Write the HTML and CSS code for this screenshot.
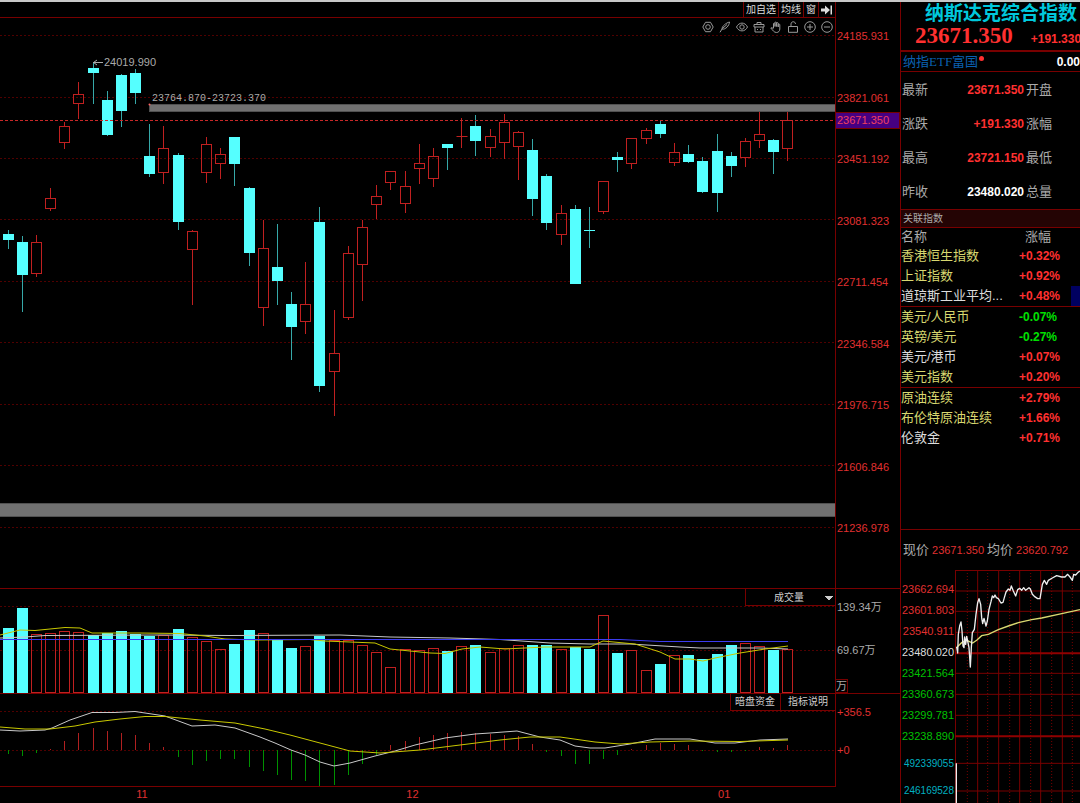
FILE: index.html
```html
<!DOCTYPE html>
<html lang="zh-CN">
<head>
<meta charset="utf-8">
<title>纳斯达克综合指数</title>
<link rel="stylesheet" href="styles.css">
</head>
<body>
<div class="terminal">
  <main class="charts">
    <header class="toolbar">
      <nav class="tabs">
        <button type="button">加自选</button>
        <button type="button">均线</button>
        <button type="button">窗</button>
        <button type="button" aria-label="收起侧栏"><svg width="12" height="10" viewBox="0 0 12 10"><path d="M0 3.500h4V0.500L9 5 4 9.500V6.500H0zM9.500 0.500h1.500v9H9.500z" fill="#ddd"/></svg></button>
      </nav>
    </header>
    <section class="panel">
      <div class="plot">
        <div class="tools">
          <button type="button" aria-label="设置"><svg viewBox="0 0 12 12"><path d="M3.500 1.300h5L11.200 6 8.500 10.700h-5L.8 6z"/><circle cx="6" cy="6" r="2.300"/></svg></button>
          <button type="button" aria-label="画笔"><svg viewBox="0 0 12 12"><path d="M1 11.300 3 8M3 8c0-3 4-6 7.500-7C10.300 4.500 6.500 9 3 8zM3.500 7.500 8 3.500"/></svg></button>
          <button type="button" aria-label="显示"><svg viewBox="0 0 12 12"><path d="M.5 6C3 .8 9 .8 11.500 6 9 11.200 3 11.200.5 6z"/><circle cx="6" cy="6" r="2.200"/></svg></button>
          <button type="button" aria-label="删除"><svg viewBox="0 0 12 12"><path d="M1 3.500h10v2.500H1zM4 3.500V1.500h4v2M2 6v5h8V6M4.500 8v1M7.500 8v1"/></svg></button>
          <button type="button" aria-label="拖动"><svg viewBox="0 0 12 12"><path d="M3.500 7V2.500q.8-1 1.500 0V5.500v-4q.9-1 1.600 0v4-3.500q.9-1 1.600 0V6 3.500q.9-.9 1.600 0V8c0 2-1.300 3.500-3.300 3.500C4 11.500 3 9.500.8 7q.7-1 2.700.7"/></svg></button>
          <button type="button" aria-label="锁定"><svg viewBox="0 0 12 12"><path d="M1.500 5.500h9v5.800h-9zM4 5.500V3c0-3 4.500-3 4.500 0"/></svg></button>
          <button type="button" aria-label="放大"><svg viewBox="0 0 12 12"><circle cx="6" cy="6" r="5.300"/><path d="M3 6h6M6 3v6"/></svg></button>
          <button type="button" aria-label="缩小"><svg viewBox="0 0 12 12"><circle cx="6" cy="6" r="5.300"/><path d="M3 6h6"/></svg></button>
        </div>
        <svg id="candles" class="candle-chart" viewBox="0 35 835 553" preserveAspectRatio="none" role="img" aria-label="日K线"></svg>
      </div>
      <div class="axis price-axis">
        <span>24185.931</span><span>23821.061</span><span>23451.192</span><span>23081.323</span><span>22711.454</span><span>22346.584</span><span>21976.715</span><span>21606.846</span><span>21236.978</span>
        <strong class="current">23671.350</strong>
      </div>
    </section>
    <section class="panel">
      <div class="plot">
        <div class="plot-head">
          <select class="indicator" aria-label="指标"><option>成交量</option></select>
        </div>
        <svg id="volume" class="volume-chart" viewBox="0 606 835 87" preserveAspectRatio="none" role="img" aria-label="成交量"></svg>
      </div>
      <div class="axis volume-axis">
        <span>139.34万</span><span class="half">69.67万</span><span class="unit">万</span>
      </div>
    </section>
    <section class="panel">
      <div class="plot">
        <div class="plot-head">
          <button type="button">暗盘资金</button><button type="button" class="wide">指标说明</button>
        </div>
        <svg id="macd" class="macd-chart" viewBox="0 711 835 75" preserveAspectRatio="none" role="img" aria-label="MACD"></svg>
      </div>
      <div class="axis macd-axis"><span>+356.5</span><span>+0</span></div>
    </section>
    <footer class="dates">
      <span style="left:16.3%">11</span><span style="left:48.600%">12</span><span style="left:85.900%">01</span>
    </footer>
  </main>

  <aside class="side">
    <h1>纳斯达克综合指数</h1>
    <div class="quote"><strong>23671.350</strong><span>+191.330</span></div>
    <div class="etf"><a href="#etf">纳指ETF富国<i></i></a><b>0.00</b></div>
    <dl class="stats">
      <dt>最新</dt><dd>23671.350</dd><dt>开盘</dt>
      <dt>涨跌</dt><dd>+191.330</dd><dt>涨幅</dt>
      <dt>最高</dt><dd>23721.150</dd><dt>最低</dt>
      <dt>昨收</dt><dd class="flat">23480.020</dd><dt>总量</dt>
    </dl>
    <h2>关联指数</h2>
    <table class="related">
      <thead><tr><th>名称</th><th>涨幅</th></tr></thead>
      <tbody>
        <tr><td>香港恒生指数</td><td>+0.32%</td></tr>
        <tr><td>上证指数</td><td>+0.92%</td></tr>
        <tr class="plain marked"><td>道琼斯工业平均...</td><td>+0.48%</td></tr>
      </tbody>
      <tbody>
        <tr class="down"><td>美元/人民币</td><td>-0.07%</td></tr>
        <tr class="down"><td>英镑/美元</td><td>-0.27%</td></tr>
        <tr class="plain"><td>美元/港币</td><td>+0.07%</td></tr>
        <tr><td>美元指数</td><td>+0.20%</td></tr>
      </tbody>
      <tbody>
        <tr><td>原油连续</td><td>+2.79%</td></tr>
        <tr><td>布伦特原油连续</td><td>+1.66%</td></tr>
        <tr class="plain"><td>伦敦金</td><td>+0.71%</td></tr>
      </tbody>
    </table>
    <section class="intraday">
      <p>现价<b>23671.350</b>均价<b>23620.792</b></p>
      <div class="mini">
        <div class="mini-axis">
          <span>23662.694</span><span>23601.803</span><span>23540.911</span><span class="base">23480.020</span><span class="low">23421.564</span><span class="low">23360.673</span><span class="low">23299.781</span><span class="low">23238.890</span><span class="vol">492339055</span><span class="vol">246169528</span>
        </div>
        <svg id="intraday" class="mini-chart" viewBox="180 117 375 699" preserveAspectRatio="none" role="img" aria-label="分时"></svg>
      </div>
    </section>
  </aside>
</div>
<script src="charts.js"></script>
</body>
</html>
```

FILE: styles.css
```css
* { box-sizing: border-box; }
:root {
  --line: #780000;
  --red: #e03030;
  --sans: "Liberation Sans", "Noto Sans CJK SC", sans-serif;
}
body {
  margin: 0;
  background: #000;
  color: #aaa;
  font: 11px/12px var(--sans);
  overflow-x: hidden;
}
button, select {
  font: inherit;
  color: inherit;
  background: none;
  border: 0;
  border-radius: 0;
  padding: 0;
  margin: 0;
}
svg { display: block; }
.terminal {
  display: flex;
  min-height: 100vh;
  border-top: 2px solid #c8c8c8;
}
.charts { flex: 1; min-width: 0; }
.toolbar {
  display: flex;
  justify-content: flex-end;
  height: 16px;
  margin-right: 64px;
  border-bottom: 1px solid var(--line);
  border-right: 1px solid var(--line);
}
.tabs { display: flex; color: #ddd; font-size: 10px; }
.tabs button {
  display: flex;
  align-items: center;
  padding: 0 2px;
  border-left: 1px solid var(--line);
}
.panel { display: flex; }
.plot {
  flex: 1;
  min-width: 0;
  border-right: 1px solid var(--line);
  border-bottom: 1px solid var(--line);
}
.plot > svg { width: 100%; }
.tools {
  display: flex;
  justify-content: flex-end;
  align-items: center;
  gap: 5px;
  height: 17px;
  padding-right: 2px;
}
.tools svg {
  width: 12px;
  height: 12px;
  fill: none;
  stroke: #999;
  stroke-width: 1;
}
.candle-chart { height: 553px; }
.volume-chart { height: 87px; }
.macd-chart { height: 75px; }
.plot-head {
  display: flex;
  justify-content: flex-end;
  height: 17px;
  color: #ccc;
  font-size: 10px;
}
.plot-head button {
  border-left: 1px solid var(--line);
  border-bottom: 1px solid var(--line);
  padding: 0 5px 0 4px;
}
.plot-head .wide { padding: 0 7px; }
.indicator {
  appearance: none;
  width: 90px;
  padding: 2px 0 0 28px;
  border-left: 1px solid var(--line);
  border-bottom: 1px solid var(--line);
  background: conic-gradient(from -45deg at 50% 100%, #ccc 90deg, transparent 0) 79px 7px / 8px 4px no-repeat;
}
.axis {
  position: relative;
  display: flex;
  flex-direction: column;
  width: 64px;
  padding-left: 1px;
  color: #aaa;
  border-bottom: 1px solid var(--line);
}
.price-axis {
  justify-content: space-between;
  padding-top: 12px;
  padding-bottom: 54px;
  color: var(--red);
}
.current {
  position: absolute;
  top: 94px;
  left: 0;
  right: 0;
  padding: 1px;
  font-weight: 400;
  color: #f04060;
  background: #460082;
  border: 1px solid var(--line);
  border-left: 0;
  line-height: 13px;
}
.volume-axis { padding-top: 12px; }
.half { margin-top: 31px; }
.unit {
  width: 12px;
  margin: auto 0 0 -1px;
  border: 1px solid var(--line);
  border-left: 0;
}
.macd-axis { gap: 26px; padding-top: 12px; color: var(--red); border-bottom: 0; }
.dates { position: relative; height: 14px; margin-right: 64px; color: var(--red); }
.dates span { position: absolute; top: 1px; }

.side {
  width: 180px;
  overflow-x: clip;
  white-space: nowrap;
  border-left: 1px solid var(--line);
}
h1 {
  margin: 0;
  padding-left: 24px;
  font: 700 19px/20px "Noto Sans CJK SC", sans-serif;
  color: #00c8dc;
}
.quote {
  display: flex;
  gap: 18px;
  align-items: center;
  height: 30px;
  padding-left: 14px;
  color: #ff3030;
  border-bottom: 2px solid var(--line);
}
.quote strong { font: bold 23px/30px "Liberation Serif", serif; }
.quote span { font-weight: 700; font-size: 12px; padding-top: 6px; }
.etf {
  display: flex;
  justify-content: space-between;
  align-items: center;
  height: 20px;
  padding-left: 2px;
  font: 13px/18px "Liberation Serif", "Noto Sans CJK SC", sans-serif;
  border-bottom: 1px solid var(--line);
}
.etf a { display: flex; color: #0a60b0; text-decoration: none; }
.etf i { width: 5px; height: 5px; margin: 3px 0 0 1px; border-radius: 50%; background: #ff3030; }
.etf b { font-family: var(--sans); font-size: 12px; color: #fff; }
.stats {
  display: grid;
  grid-template-columns: 28px 94px 1fr;
  margin: 0;
  padding: 1px 0 0 1px;
  font-size: 13px;
  line-height: 34px;
  border-bottom: 1px solid var(--line);
}
.stats dd { margin: 0; font-size: 12px; font-weight: 700; text-align: right; color: #ff3030; }
.stats dt:nth-of-type(even) { padding-left: 2px; }
.stats .flat { color: #fff; }
h2 {
  margin: 0;
  padding-left: 2px;
  font: 10px/17px var(--sans);
  background: #240404;
  border-bottom: 1px solid var(--line);
}
.related { width: 100%; border-collapse: collapse; font-size: 13px; line-height: 20px; }
.related th { padding: 0; font-weight: 400; text-align: left; line-height: 18px; }
.related th + th { padding-left: 6px; }
.related td { padding: 0; width: 118px; color: #d8d870; }
.related td + td { width: auto; font-size: 12px; font-weight: 700; color: #ff3030; }
.related tbody + tbody { border-top: 1px solid var(--line); }
.related .plain td:first-child { color: #ddd; }
.related .down td + td { color: #00e000; }
.related .marked td + td { background: linear-gradient(#000060, #000060) right / 9px 100% no-repeat; }
.intraday { margin-top: 81px; border-top: 1px solid var(--line); }
.intraday p { margin: 0; padding-left: 2px; font-size: 13px; line-height: 39px; }
.intraday p b { padding: 0 3px; font-size: 11px; font-weight: 400; color: var(--red); }
.mini { display: flex; }
.mini-axis {
  width: 54px;
  padding: 9px 1px 0 0;
  line-height: 21px;
  text-align: right;
  color: var(--red);
}
.mini-axis span { display: block; height: 21px; }
.mini-axis .base { color: #ddd; }
.mini-axis .low { color: #00c000; }
.mini-axis .vol { height: 27px; font-size: 10px; line-height: 33px; color: #00b0c0; }
.mini-chart { flex: 1; min-width: 0; height: 233px; }

.grid { stroke: #500000; stroke-dasharray: 2 2; fill: none; }
.last { stroke: #c82828; stroke-dasharray: 3 2; }
.band { fill: #707070; stroke: #505050; }
.up { fill: none; stroke: #c02020; }
.fall { fill: #55ffff; }
.wick-fall { stroke: #36a8a8; }
.bar-up { stroke: #b02020; }
.bar-down { stroke: #009000; }
.ma { fill: none; stroke-width: 1; }
.white { stroke: #c8c8c8; }
.yellow { stroke: #c8c800; }
.blue { stroke: #3c3cf0; }
.note { fill: #aaa; font-size: 11px; }
.note-mono { fill: #aaa; font: 10px "Liberation Mono", monospace; }
.frame { fill: none; stroke: #780000; stroke-width: 3; }
.frame-strong { stroke: #900000; stroke-width: 6; }
.dots { fill: none; stroke: #780000; stroke-width: 3; stroke-dasharray: 3 6; }
.tick { fill: none; stroke: #eee; stroke-width: 4; stroke-linejoin: round; }
.avg { fill: none; stroke: #d8d870; stroke-width: 4; }
```

FILE: charts.js
```js
// Each day: direction, high, body top, body bottom, low, volume top, oscillator end
const days = [
  ["d",230,234,240,249,628,754],["d",236,242,275,312,608,756],["u",235,242,274,277,634,753],
  ["u",188,198,209,211,633,749],["u",122,126,143,149,631,741],["u",82,94,104,119,632,733],
  ["d",62,68,73,104,635,728],["d",91,100,135,136,633,731],["d",74,75,111,127,631,733],
  ["d",69,73,93,104,634,735],["d",124,156,174,177,636,743],["u",126,148,173,184,635,747],
  ["d",153,155,222,230,629,757],["u",230,231,250,305,637,765],["u",137,144,173,183,641,761],
  ["u",148,154,164,179,649,759],["d",137,137,164,186,644,759],["d",187,188,253,266,630,767],
  ["u",220,248,308,326,633,771],["d",224,267,281,305,639,775],["d",292,304,327,360,648,780],
  ["u",262,304,322,334,646,781],["d",207,222,386,392,636,786],["u",310,353,372,416,640,785],
  ["u",246,253,318,320,640,775],["u",220,227,265,301,645,764],["u",185,196,205,219,652,755],
  ["u",171,171,183,190,667,745],["u",171,186,204,213,649,741],["u",144,163,169,184,650,737],
  ["u",148,156,179,187,648,735],["d",144,144,148,170,651,733],["u",118,136,137,148,646,732],
  ["d",115,126,141,156,645,733],["u",129,136,148,157,652,734],["u",114,122,143,159,648,735],
  ["u",131,132,147,180,645,736],["d",139,150,199,216,645,744],["d",174,176,223,230,645,752],
  ["u",205,213,235,245,649,756],["d",205,209,284,284,647,764],["d",207,230,231,248,649,764],
  ["u",181,181,212,214,615,759],["d",152,157,160,172,653,755],["u",138,138,164,169,650,749],
  ["u",128,130,139,144,670,745],["d",121,124,134,138,664,743],["u",143,152,163,166,655,744],
  ["d",145,154,162,163,655,745],["d",157,161,192,193,659,751],["d",134,151,193,212,654,752],
  ["d",152,156,166,177,645,752],["u",138,141,158,167,643,751],["u",112,134,141,148,646,747],
  ["d",139,140,152,174,650,748],["u",112,120,149,161,649,745]
];
const centre = i => Math.round(7.5 + i * 14.18) + 0.5;
const line = (c, x1, y1, x2, y2) => `<line class="${c}" x1="${x1}" y1="${y1}" x2="${x2}" y2="${y2}"/>`;
const poly = (c, p) => `<polyline class="${c}" points="${p}"/>`;
const put = (id, s) => { document.getElementById(id).innerHTML = s; };

let candles = "", volume = "", macd = "";
for (const y of [35, 97, 158, 219, 281, 342, 404, 465, 527]) candles += line("grid", 0, y + 0.5, 835, y + 0.5);
candles += `<rect class="band" x="149.500" y="104.500" width="690" height="7"/><rect class="band" x="-2" y="503.500" width="840" height="13"/>`;
volume += line("grid", 0, 606.5, 835, 606.5) + line("grid", 0, 650.5, 835, 650.5);
macd += line("grid", 0, 711.5, 835, 711.5) + line("grid", 0, 750.5, 835, 750.5);

days.forEach(([dir, high, top, bottom, low, vol, osc], i) => {
  const x = centre(i);
  if (dir === "u") {
    candles += line("up", x, high, x, top) + line("up", x, bottom, x, low)
      + `<rect class="up" x="${x - 5}" y="${top + 0.5}" width="10" height="${bottom - top - 1}"/>`;
    if (bottom - top < 2) candles += line("up", x - 5, top + 0.5, x + 6, top + 0.5);
    volume += `<rect class="up" x="${x - 5}" y="${vol + 0.5}" width="10" height="${692 - vol}"/>`;
  } else {
    candles += line("wick-fall", x, high, x, low)
      + `<rect class="fall" x="${x - 5.5}" y="${top}" width="11" height="${bottom - top}"/>`;
    volume += `<rect class="fall" x="${x - 5.5}" y="${vol}" width="11" height="${693 - vol}"/>`;
  }
  macd += line(osc < 750 ? "bar-up" : "bar-down", x, 750, x, osc);
});

candles += line("last", 0, 120.5, 835, 120.5)
  + `<path d="M93 62.500h10M97 60l-3.500 2.500 3.500 2.500" fill="none" stroke="#aaa"/>`
  + `<text class="note" x="104" y="66">24019.990</text>`
  + `<text class="note-mono" x="152" y="101">23764.870-23723.370</text>`
  + `<circle cx="149.500" cy="104.500" r="1" fill="#ff6060"/>`;
volume += poly("ma white", "0,638 25,637 45,635.500 160,635 230,635.500 340,635 390,637 450,638 500,639.500 550,643 590,644 630,644 680,647 700,648 760,648 788,649")
  + poly("ma yellow", "0,635 20,630 35,630.500 65,627.500 80,628 92,633 140,633 180,633.500 205,636 225,639 255,640 310,639.500 325,641 375,643 390,649 410,651 430,653 445,653.500 462,649 480,647 505,649 545,647 590,647 603,641 635,644 660,652 675,659 690,659 703,661 715,658 740,653 765,649 788,646")
  + poly("ma blue", "0,639.500 500,639.500 620,639.500 660,641.500 788,641.500");
macd += poly("ma white", "0,730 20,731 45,730 52,728 70,720 92,712.500 115,712.500 135,711.500 165,716 192,726 215,725 235,728 260,737 275,743 291,750 305,755 320,762 334,766 350,763 375,756 395,751 415,745 445,738 475,734 490,733 517,731 540,737 560,740 575,746 590,748 605,748 630,744 655,739 690,739 715,743 735,743 760,740 788,739")
  + poly("ma yellow", "0,727 25,729 50,729 75,726 95,722 120,719 145,716.500 165,716.500 200,720 235,723 265,729 290,735 320,743 350,751 380,753 420,750 460,745 500,740 530,737 560,737 595,742 620,744 650,742 690,741 740,741.500 788,740");

let mini = "";
for (const x of [181.5, 248, 311, 374, 437, 502]) mini += line("frame", x, 117, x, 819);
for (const x of [217, 278, 344, 407, 470, 532]) mini += line("dots", x, 117, x, 819);
for (const y of [118.5, 180, 241, 304, 427, 490, 553, 697, 780]) mini += line("frame", 180, y, 555, y);
mini += line("frame-strong", 180, 367, 555, 367) + line("frame-strong", 180, 616, 555, 616)
  + poly("avg", "184,350 200,335 215,328 233,336 245,328 260,314 280,310 310,296 340,285 370,275 410,266 440,261 490,250 555,236")
  + poly("tick", "185,348 188,366 190,310 194,285 198,273 201,300 204,345 207,350 209,318 212,340 215,316 218,330 222,350 226,408 229,350 232,305 238,295 243,250 248,215 252,203 257,220 260,260 263,278 267,262 273,285 277,270 282,235 288,212 292,195 296,200 300,192 304,200 310,203 318,216 324,214 328,200 333,183 340,174 345,178 349,165 355,180 362,195 368,176 374,172 380,178 386,170 392,178 402,170 406,174 412,190 418,196 428,203 435,203 438,185 442,160 448,148 455,160 460,148 472,141 485,134 500,138 510,138 518,130 525,138 532,148 536,130 542,132 549,124 555,120")
  + line("tick", 184, 697, 184, 819);

put("candles", candles);
put("volume", volume);
put("macd", macd);
put("intraday", mini);
```
